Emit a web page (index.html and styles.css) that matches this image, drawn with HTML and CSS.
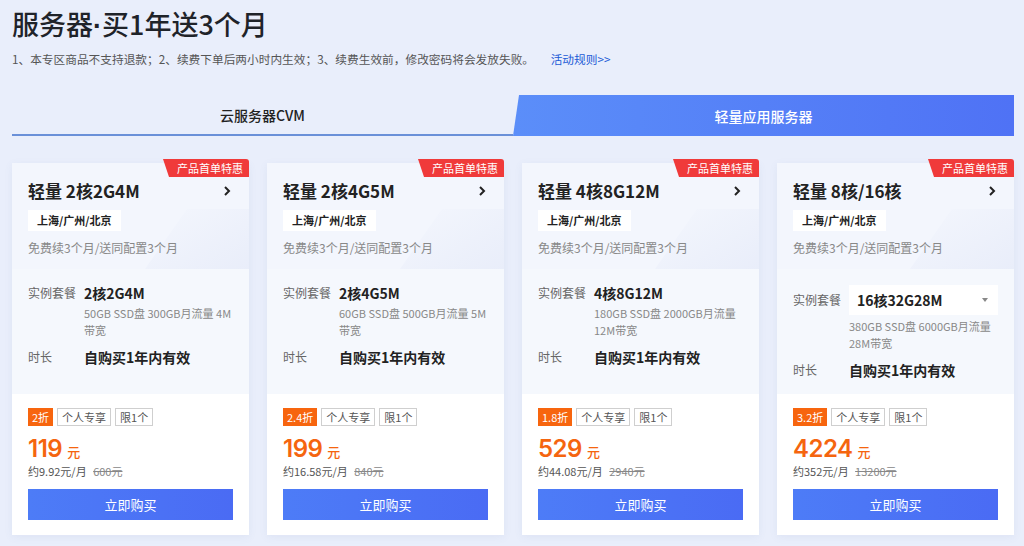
FILE: index.html
```html
<!DOCTYPE html>
<html lang="zh-CN">
<head>
    <meta charset="UTF-8">
    <title>服务器·买1年送3个月</title>
    <link rel="stylesheet" href="styles.css">
</head>
<body>
    <div class="page">
        <h1 class="title">服务器<span class="dot">·</span>买1年送3个月</h1>
        <p class="notice">1、本专区商品不支持退款；2、续费下单后两小时内生效；3、续费生效前，修改密码将会发放失败。 <a href="#" class="rules">活动规则&gt;&gt;</a></p>

        <div class="tabs">
            <div class="tab">云服务器CVM</div>
            <div class="tab active">轻量应用服务器</div>
        </div>

        <div class="cards">
            <div class="card">
                <span class="badge">产品首单特惠</span>
                <div class="card-head">
                    <div class="card-title">
                        <span>轻量 2核2G4M</span>
                        <svg class="arrow" width="8" height="10" viewBox="0 0 8 10"><path d="M2 1l4 4-4 4" fill="none" stroke="#222" stroke-width="2"/></svg>
                    </div>
                    <span class="region">上海/广州/北京</span>
                    <p class="desc">免费续3个月/送同配置3个月</p>
                </div>
                <div class="card-body">
                    <div class="row">
                        <span class="label">实例套餐</span>
                        <div class="value">
                            <div class="spec">2核2G4M</div>
                            <div class="spec-sub">50GB SSD盘 300GB月流量 4M 带宽</div>
                        </div>
                    </div>
                    <div class="row">
                        <span class="label">时长</span>
                        <div class="value"><div class="spec">自购买1年内有效</div></div>
                    </div>
                </div>
                <div class="card-foot">
                    <div class="tags"><span class="off">2折</span><span class="tag">个人专享</span><span class="tag">限1个</span></div>
                    <div class="price"><span class="num">119</span><small>元</small></div>
                    <div class="monthly">约9.92元/月 <s>600元</s></div>
                    <button class="buy">立即购买</button>
                </div>
            </div>

            <div class="card">
                <span class="badge">产品首单特惠</span>
                <div class="card-head">
                    <div class="card-title">
                        <span>轻量 2核4G5M</span>
                        <svg class="arrow" width="8" height="10" viewBox="0 0 8 10"><path d="M2 1l4 4-4 4" fill="none" stroke="#222" stroke-width="2"/></svg>
                    </div>
                    <span class="region">上海/广州/北京</span>
                    <p class="desc">免费续3个月/送同配置3个月</p>
                </div>
                <div class="card-body">
                    <div class="row">
                        <span class="label">实例套餐</span>
                        <div class="value">
                            <div class="spec">2核4G5M</div>
                            <div class="spec-sub">60GB SSD盘 500GB月流量 5M 带宽</div>
                        </div>
                    </div>
                    <div class="row">
                        <span class="label">时长</span>
                        <div class="value"><div class="spec">自购买1年内有效</div></div>
                    </div>
                </div>
                <div class="card-foot">
                    <div class="tags"><span class="off">2.4折</span><span class="tag">个人专享</span><span class="tag">限1个</span></div>
                    <div class="price"><span class="num">199</span><small>元</small></div>
                    <div class="monthly">约16.58元/月 <s>840元</s></div>
                    <button class="buy">立即购买</button>
                </div>
            </div>

            <div class="card">
                <span class="badge">产品首单特惠</span>
                <div class="card-head">
                    <div class="card-title">
                        <span>轻量 4核8G12M</span>
                        <svg class="arrow" width="8" height="10" viewBox="0 0 8 10"><path d="M2 1l4 4-4 4" fill="none" stroke="#222" stroke-width="2"/></svg>
                    </div>
                    <span class="region">上海/广州/北京</span>
                    <p class="desc">免费续3个月/送同配置3个月</p>
                </div>
                <div class="card-body">
                    <div class="row">
                        <span class="label">实例套餐</span>
                        <div class="value">
                            <div class="spec">4核8G12M</div>
                            <div class="spec-sub">180GB SSD盘 2000GB月流量 12M带宽</div>
                        </div>
                    </div>
                    <div class="row">
                        <span class="label">时长</span>
                        <div class="value"><div class="spec">自购买1年内有效</div></div>
                    </div>
                </div>
                <div class="card-foot">
                    <div class="tags"><span class="off">1.8折</span><span class="tag">个人专享</span><span class="tag">限1个</span></div>
                    <div class="price"><span class="num">529</span><small>元</small></div>
                    <div class="monthly">约44.08元/月 <s>2940元</s></div>
                    <button class="buy">立即购买</button>
                </div>
            </div>

            <div class="card">
                <span class="badge">产品首单特惠</span>
                <div class="card-head">
                    <div class="card-title">
                        <span>轻量 8核/16核</span>
                        <svg class="arrow" width="8" height="10" viewBox="0 0 8 10"><path d="M2 1l4 4-4 4" fill="none" stroke="#222" stroke-width="2"/></svg>
                    </div>
                    <span class="region">上海/广州/北京</span>
                    <p class="desc">免费续3个月/送同配置3个月</p>
                </div>
                <div class="card-body">
                    <div class="row row-select">
                        <span class="label select-label">实例套餐</span>
                        <div class="value">
                            <div class="select">16核32G28M<span class="caret"></span></div>
                            <div class="spec-sub">380GB SSD盘 6000GB月流量 28M带宽</div>
                        </div>
                    </div>
                    <div class="row">
                        <span class="label">时长</span>
                        <div class="value"><div class="spec">自购买1年内有效</div></div>
                    </div>
                </div>
                <div class="card-foot">
                    <div class="tags"><span class="off">3.2折</span><span class="tag">个人专享</span><span class="tag">限1个</span></div>
                    <div class="price"><span class="num">4224</span><small>元</small></div>
                    <div class="monthly">约352元/月 <s>13200元</s></div>
                    <button class="buy">立即购买</button>
                </div>
            </div>
        </div>
    </div>
</body>
</html>
```

FILE: styles.css
```css
body {
    margin: 0;
    background-color: #e9eefb;
    font-family: "Noto Sans CJK SC", "Noto Sans", sans-serif;
    color: #222;
}

.page {
    padding: 0 10px 10px 12px;
}

.title {
    margin: 0;
    padding-top: 6px;
    font-size: 27px;
    line-height: 36px;
    font-weight: 500;
    color: #1f2329;
}

.title .dot {
    font-family: "Liberation Sans", sans-serif;
    font-weight: 700;
}

.notice {
    margin: 6px 0 0;
    font-size: 11.7px;
    line-height: 18px;
    color: #555;
}

.rules {
    margin-left: 14px;
    color: #1a5ad6;
    text-decoration: none;
}

.tabs {
    display: flex;
    margin-top: 27px;
    height: 41px;
}

.tab {
    flex: 1;
    display: flex;
    align-items: center;
    justify-content: center;
    font-size: 14px;
    font-weight: 500;
    color: #222;
    border-bottom: 2px solid #6a90d8;
}

.tab.active {
    border-bottom: none;
    color: #fff;
    background: linear-gradient(90deg, #5b8ef9, #4f72f5);
    clip-path: polygon(6px 0, 100% 0, 100% 100%, 0 100%);
}

.cards {
    display: grid;
    grid-template-columns: repeat(4, 1fr);
    gap: 18px;
    margin-top: 27px;
}

.card {
    position: relative;
    background-color: #fff;
    box-shadow: 0 2px 8px rgba(90, 110, 170, 0.08);
}

.badge {
    position: absolute;
    z-index: 2;
    top: -4px;
    right: 0;
    padding: 0 6px 0 14px;
    height: 18px;
    line-height: 18px;
    font-size: 11px;
    color: #fff;
    background-color: #f03a3a;
    border-top-right-radius: 3px;
    clip-path: polygon(0 0, 100% 0, 100% 100%, 6px 100%);
}

.card-head {
    position: relative;
    overflow: hidden;
    padding: 16px 16px 12px;
    background-color: #f3f6fd;
}

.card-head::after {
    content: "";
    position: absolute;
    right: -40px;
    bottom: -20px;
    width: 130px;
    height: 80px;
    background: linear-gradient(135deg, rgba(228, 233, 248, 0.1), rgba(222, 228, 246, 0.6));
    transform: skewX(-35deg);
}

.card-title {
    position: relative;
    z-index: 1;
    display: flex;
    justify-content: space-between;
    align-items: center;
    padding-right: 2px;
    font-size: 17px;
    line-height: 24px;
    font-weight: 600;
}

.region {
    position: relative;
    z-index: 1;
    display: inline-block;
    margin-top: 7px;
    padding: 0 9px;
    height: 21px;
    line-height: 21px;
    font-size: 11px;
    font-weight: 600;
    background-color: #fff;
}

.desc {
    position: relative;
    z-index: 1;
    margin: 8px 0 0;
    font-size: 12px;
    line-height: 18px;
    color: #888;
}

.card-body {
    padding: 14px 16px 0;
    height: 111px;
    background-color: #f5f8fd;
}

.row {
    display: flex;
    margin-bottom: 8px;
}

.row-select {
    margin-top: 2px;
}

.label {
    width: 56px;
    flex-shrink: 0;
    font-size: 12px;
    line-height: 20px;
    color: #666;
}

.select-label {
    line-height: 30px;
}

.value {
    flex: 1;
}

.spec {
    font-size: 14px;
    line-height: 20px;
    font-weight: 600;
}

.spec-sub {
    margin-top: 2px;
    font-size: 11px;
    line-height: 17px;
    color: #888;
}

.select + .spec-sub {
    margin-top: 3px;
}

.select {
    display: flex;
    justify-content: space-between;
    align-items: center;
    height: 30px;
    padding: 0 8px;
    background-color: #fff;
    font-size: 14px;
    font-weight: 600;
}

.caret {
    width: 0;
    height: 0;
    border-left: 3px solid transparent;
    border-right: 3px solid transparent;
    border-top: 4px solid #888;
    margin-right: 2px;
}

.card-foot {
    padding: 14px 16px 15px;
}

.tags {
    display: flex;
    gap: 4px;
    height: 18px;
}

.off,
.tag {
    display: inline-block;
    height: 18px;
    line-height: 18px;
    padding: 0 4px;
    font-size: 11px;
    box-sizing: border-box;
}

.off {
    color: #fff;
    background-color: #f7650e;
}

.tag {
    color: #555;
    border: 1px solid #cfcfcf;
    line-height: 16px;
}

.price {
    display: flex;
    align-items: baseline;
    height: 29px;
    margin-top: 8px;
    color: #f5650f;
}

.price .num {
    font-family: Inter, "Liberation Sans", sans-serif;
    font-size: 24px;
    line-height: 29px;
    font-weight: 600;
    letter-spacing: -0.5px;
}

.price small {
    margin-left: 5px;
    font-size: 13px;
    line-height: 16px;
    font-weight: 500;
}

.monthly {
    font-size: 11px;
    line-height: 16px;
    color: #555;
}

.monthly s {
    margin-left: 4px;
    color: #888;
}

.buy {
    display: block;
    width: 100%;
    height: 31px;
    margin-top: 10px;
    border: none;
    color: #fff;
    font-family: inherit;
    font-size: 13px;
    background: linear-gradient(90deg, #4d7cf7, #4a6bf4);
    cursor: pointer;
}
```
